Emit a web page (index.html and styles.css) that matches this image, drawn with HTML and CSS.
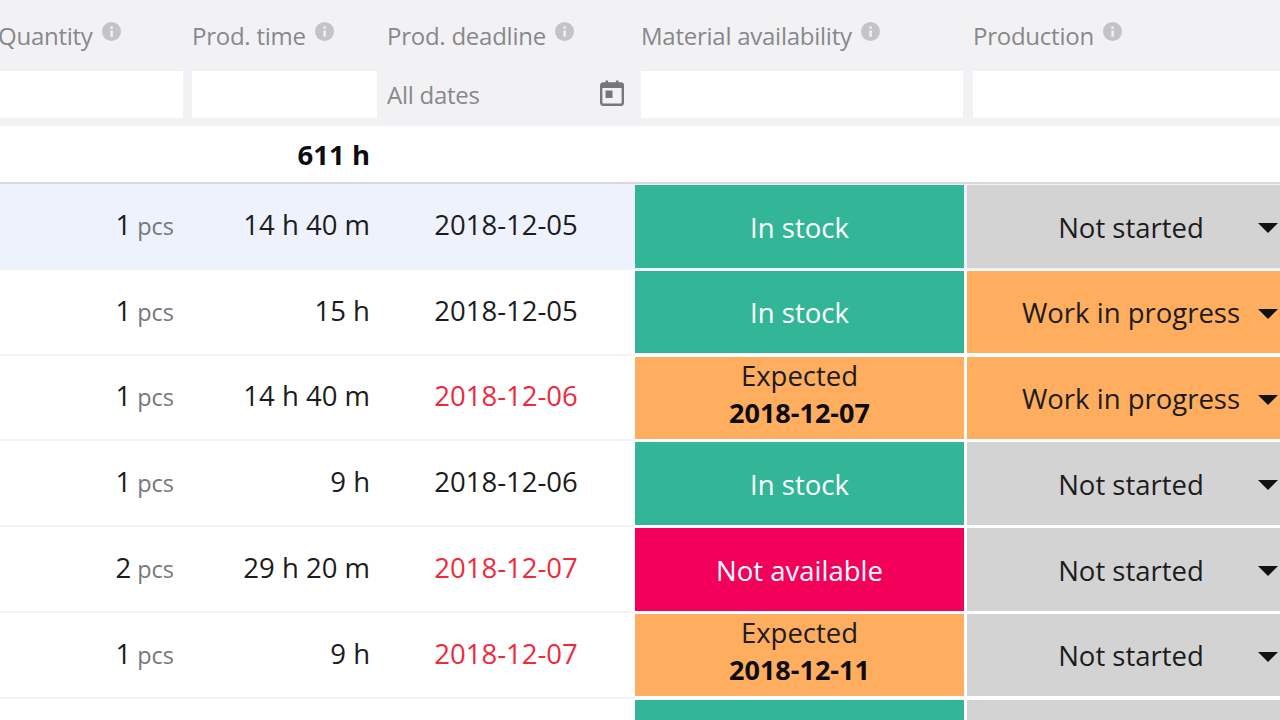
FILE: index.html
```html
<!DOCTYPE html>
<html lang="en">
<head>
<meta charset="utf-8">
<title>Production planning</title>
<link rel="stylesheet" href="styles.css">
</head>
<body>
<svg class="defs" aria-hidden="true"><symbol id="info" viewBox="0 0 18 18"><circle cx="9" cy="9" r="9" fill="#c4c4c6"/><rect x="7.9" y="8" width="2.4" height="6" fill="#f1f1f3"/><rect x="7.9" y="4.2" width="2.4" height="2.2" fill="#f1f1f3"/></symbol></svg>
<main class="sheet">
  <header class="head">
    <div class="row titles">
      <div class="title first">Quantity<svg class="info"><use href="#info"/></svg></div>
      <div class="title">Prod. time<svg class="info"><use href="#info"/></svg></div>
      <div class="title">Prod. deadline<svg class="info"><use href="#info"/></svg></div>
      <div class="title mat">Material availability<svg class="info"><use href="#info"/></svg></div>
      <div class="title">Production<svg class="info"><use href="#info"/></svg></div>
    </div>
    <div class="row filters">
      <div class="filter first"><div class="box"></div></div>
      <div class="filter"><div class="box"></div></div>
      <div class="filter dates"><span>All dates</span>
        <svg class="cal" viewBox="0 0 24 26" fill="none"><rect x="1.2" y="3.5" width="21.6" height="21.3" rx="2" stroke="#77777b" stroke-width="2.4"/><rect x="1" y="3" width="22" height="5" fill="#77777b"/><rect x="5.5" y="0.5" width="2.6" height="4" fill="#77777b"/><rect x="15.9" y="0.5" width="2.6" height="4" fill="#77777b"/><rect x="5.5" y="10.5" width="7" height="7.5" fill="#77777b"/></svg>
      </div>
      <div class="filter mat"><div class="box"></div></div>
      <div class="filter"><div class="box"></div></div>
    </div>
  </header>
  <div class="row summary"><div></div><div class="time total">611 h</div></div>

  <div class="row item active">
    <div class="qty">1 <small>pcs</small></div><div class="time">14 h 40 m</div><div class="date">2018-12-05</div>
    <div class="status green">In stock</div><div class="prod grey">Not started<i class="caret"></i></div>
  </div>
  <div class="row item">
    <div class="qty">1 <small>pcs</small></div><div class="time">15 h</div><div class="date">2018-12-05</div>
    <div class="status green">In stock</div><div class="prod orange">Work in progress<i class="caret"></i></div>
  </div>
  <div class="row item">
    <div class="qty">1 <small>pcs</small></div><div class="time">14 h 40 m</div><div class="date late">2018-12-06</div>
    <div class="status orange dark">Expected<b>2018-12-07</b></div><div class="prod orange">Work in progress<i class="caret"></i></div>
  </div>
  <div class="row item">
    <div class="qty">1 <small>pcs</small></div><div class="time">9 h</div><div class="date">2018-12-06</div>
    <div class="status green">In stock</div><div class="prod grey">Not started<i class="caret"></i></div>
  </div>
  <div class="row item">
    <div class="qty">2 <small>pcs</small></div><div class="time">29 h 20 m</div><div class="date late">2018-12-07</div>
    <div class="status red">Not available</div><div class="prod grey">Not started<i class="caret"></i></div>
  </div>
  <div class="row item">
    <div class="qty">1 <small>pcs</small></div><div class="time">9 h</div><div class="date late">2018-12-07</div>
    <div class="status orange dark">Expected<b>2018-12-11</b></div><div class="prod grey">Not started<i class="caret"></i></div>
  </div>
  <div class="row item">
    <div class="qty"></div><div class="time"></div><div class="date"></div>
    <div class="status green"></div><div class="prod grey"></div>
  </div>
</main>
</body>
</html>
```
FILE: styles.css
```css
* { box-sizing: border-box; }
html, body { margin: 0; height: 720px; overflow: hidden; background: #fff; }
.defs { display: none; }
.sheet {
  width: 1310px;
  height: 720px;
  overflow: hidden;
  margin-left: -15px;
  font-family: "Open Sans", "Liberation Sans", sans-serif;
  font-size: 27.5px;
  color: #1c1c20;
}
.row {
  display: grid;
  grid-template-columns: 200px 195px 255px 331px 329px;
}
.head { background: #f2f2f4; height: 126px; }
.titles { height: 71px; padding-top: 19px; }
.title {
  display: flex;
  align-items: flex-start;
  padding-left: 7px;
  font-size: 24px;
  line-height: 34px;
  letter-spacing: -0.25px;
  color: #88888c;
}
.title.first { padding-left: 13px; }
.title.mat { padding-left: 6px; }
.info { width: 19px; height: 19px; margin: 3px 0 0 9px; flex: none; }
.filters { height: 47px; }
.filter { padding: 0 3px 0 7px; }
.filter.first { padding: 0 2px 0 0; }
.filter.mat { padding-left: 6px; }
.box { height: 47px; background: #fff; }
.dates {
  display: flex;
  align-items: center;
  justify-content: space-between;
  padding-right: 11px;
  font-size: 24px;
  letter-spacing: -0.25px;
  color: #88888c;
}
.cal { width: 24px; height: 26px; flex: none; margin-bottom: 3px; }
.summary {
  height: 58px;
  border-bottom: 2px solid #d9d9db;
  align-items: center;
}
.summary .total { border: 0; padding: 0 10px 0 0; font-size: 27.5px; font-weight: 700; color: #0c0c10; }
.item { height: 85.8px; }
.qty, .time, .date {
  display: flex;
  align-items: center;
  justify-content: flex-end;
  padding: 0 10px 3px 0;
  border-bottom: 2px solid #f3f3f5;
}
.qty { padding-right: 11px; }
.qty small { font-size: 23.5px; color: #77777b; margin: 3px 0 0 6px; }
.date { justify-content: center; padding: 0 3px 3px 0; }
.late { color: #ee2a3c; }
.active { background: #eef2fc; }
.status, .prod {
  display: flex;
  flex-direction: column;
  align-items: center;
  justify-content: center;
  height: 82.5px;
  margin-top: 1px;
  padding-top: 1.5px;
  line-height: 37px;
}
.status { margin-right: 2px; }
.prod { position: relative; margin-left: 1px; }
.status b { font-size: 27px; font-weight: 700; color: #0c0c10; }
.green { background: #32b697; color: #fff; }
.red { background: #f3005a; color: #fff; }
.orange { background: #ffad5e; }
.grey { background: #d3d3d3; }
.status.dark { color: #1c1c20; padding: 0 0 8px; }
.caret {
  position: absolute;
  left: 291px;
  top: 38px;
  border-style: solid;
  border-width: 10px 10.5px 0;
  border-color: #111 transparent transparent;
}
```
